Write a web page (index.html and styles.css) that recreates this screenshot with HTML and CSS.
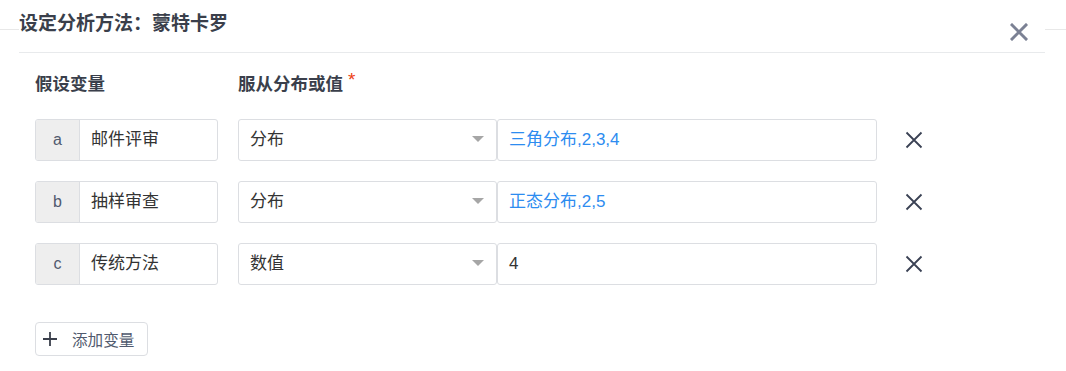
FILE: index.html
```html
<html><head>
<meta charset="utf-8">
<title>蒙特卡罗</title>
<link rel="stylesheet" href="styles.css">
</head><body>

<div class="dialog">
<div class="dialog-head">
<span class="title">设定分析方法：蒙特卡罗</span>
<span class="close"><svg width="18" height="18" viewBox="0 0 18 18"><path d="M2 2L16 16M16 2L2 16" stroke="#7b8194" stroke-width="3" stroke-linecap="square"/></svg></span>
</div>

<div class="dialog-body">
<div class="labels">
<div class="col-var">假设变量</div>
<div class="col-dist">服从分布或值<span class="req">*</span></div>
</div>

<div class="row">
<div class="var"><span class="prefix">a</span><span class="var-name">邮件评审</span></div>
<div class="select">分布<i class="arrow"></i></div>
<div class="value blue">三角分布,2,3,4</div>
<span class="del"><svg width="18" height="18" viewBox="0 0 18 18"><path d="M1.5 1.5L16.5 16.5M16.5 1.5L1.5 16.5" stroke="#3a4154" stroke-width="1.8"/></svg></span>
</div>

<div class="row">
<div class="var"><span class="prefix">b</span><span class="var-name">抽样审查</span></div>
<div class="select">分布<i class="arrow"></i></div>
<div class="value blue">正态分布,2,5</div>
<span class="del"><svg width="18" height="18" viewBox="0 0 18 18"><path d="M1.5 1.5L16.5 16.5M16.5 1.5L1.5 16.5" stroke="#3a4154" stroke-width="1.8"/></svg></span>
</div>

<div class="row">
<div class="var"><span class="prefix">c</span><span class="var-name">传统方法</span></div>
<div class="select">数值<i class="arrow"></i></div>
<div class="value">4</div>
<span class="del"><svg width="18" height="18" viewBox="0 0 18 18"><path d="M1.5 1.5L16.5 16.5M16.5 1.5L1.5 16.5" stroke="#3a4154" stroke-width="1.8"/></svg></span>
</div>

<div class="add"><svg class="plus" width="14" height="14" viewBox="0 0 14 14"><path d="M7 0V14M0 7H14" stroke="#3a3f4b" stroke-width="1.8"/></svg>添加变量</div>
</div>
</div>

</body></html>
```

FILE: styles.css
```css
body{margin:0;background:#fff linear-gradient(#e8e8e8,#e8e8e8) 0 29px/100% 1px no-repeat;font-family:"Liberation Sans","Noto Sans CJK SC",sans-serif;color:#333;}

.dialog{position:relative;margin-left:19px;width:1026px;background:#fff;}
.dialog-head{height:41px;padding-top:11px;border-bottom:1px solid #e8eaec;}
.title{font-size:19px;line-height:26px;font-weight:bold;color:#3a3f4b;}
.close{position:absolute;top:23px;right:17px;width:18px;height:18px;}
.close svg,.del svg{display:block;}

.dialog-body{padding:19px 0 0 16px;}
.labels{display:flex;height:24px;line-height:24px;font-size:17.5px;font-weight:bold;color:#3a3f4b;margin-bottom:23px;}
.col-var{width:203px;}
.req{color:#ed4014;font-size:19px;font-weight:normal;vertical-align:top;line-height:16px;margin-left:5px;}

.row{display:flex;align-items:center;height:42px;margin-bottom:20px;font-size:17px;}
.var{display:flex;width:181px;height:40px;border:1px solid #dcdee2;border-radius:3px;margin-right:20px;overflow:hidden;}
.prefix{width:43px;background:#eeeeee;border-right:1px solid #dcdee2;text-align:center;line-height:40px;color:#515a6e;font-size:16px;}
.var-name{padding-left:11px;line-height:40px;}

.select{position:relative;width:246px;height:40px;line-height:40px;padding-left:11px;border:1px solid #dcdee2;border-radius:3px;}
.arrow{position:absolute;right:12px;top:16px;width:0;height:0;border-left:6px solid transparent;border-right:6px solid transparent;border-top:6px solid #a6a6a6;}
.value{width:367px;height:40px;line-height:40px;padding-left:11px;border:1px solid #dcdee2;border-radius:3px;}
.blue{color:#2d8cf0;}
.del{margin-left:28px;width:18px;height:18px;}

.add{display:inline-flex;align-items:center;height:32px;padding:0 13px 0 7px;margin-top:17px;border:1px solid #dcdee2;border-radius:4px;font-size:15.6px;color:#515a6e;}
.plus{margin-right:15px;}
```
